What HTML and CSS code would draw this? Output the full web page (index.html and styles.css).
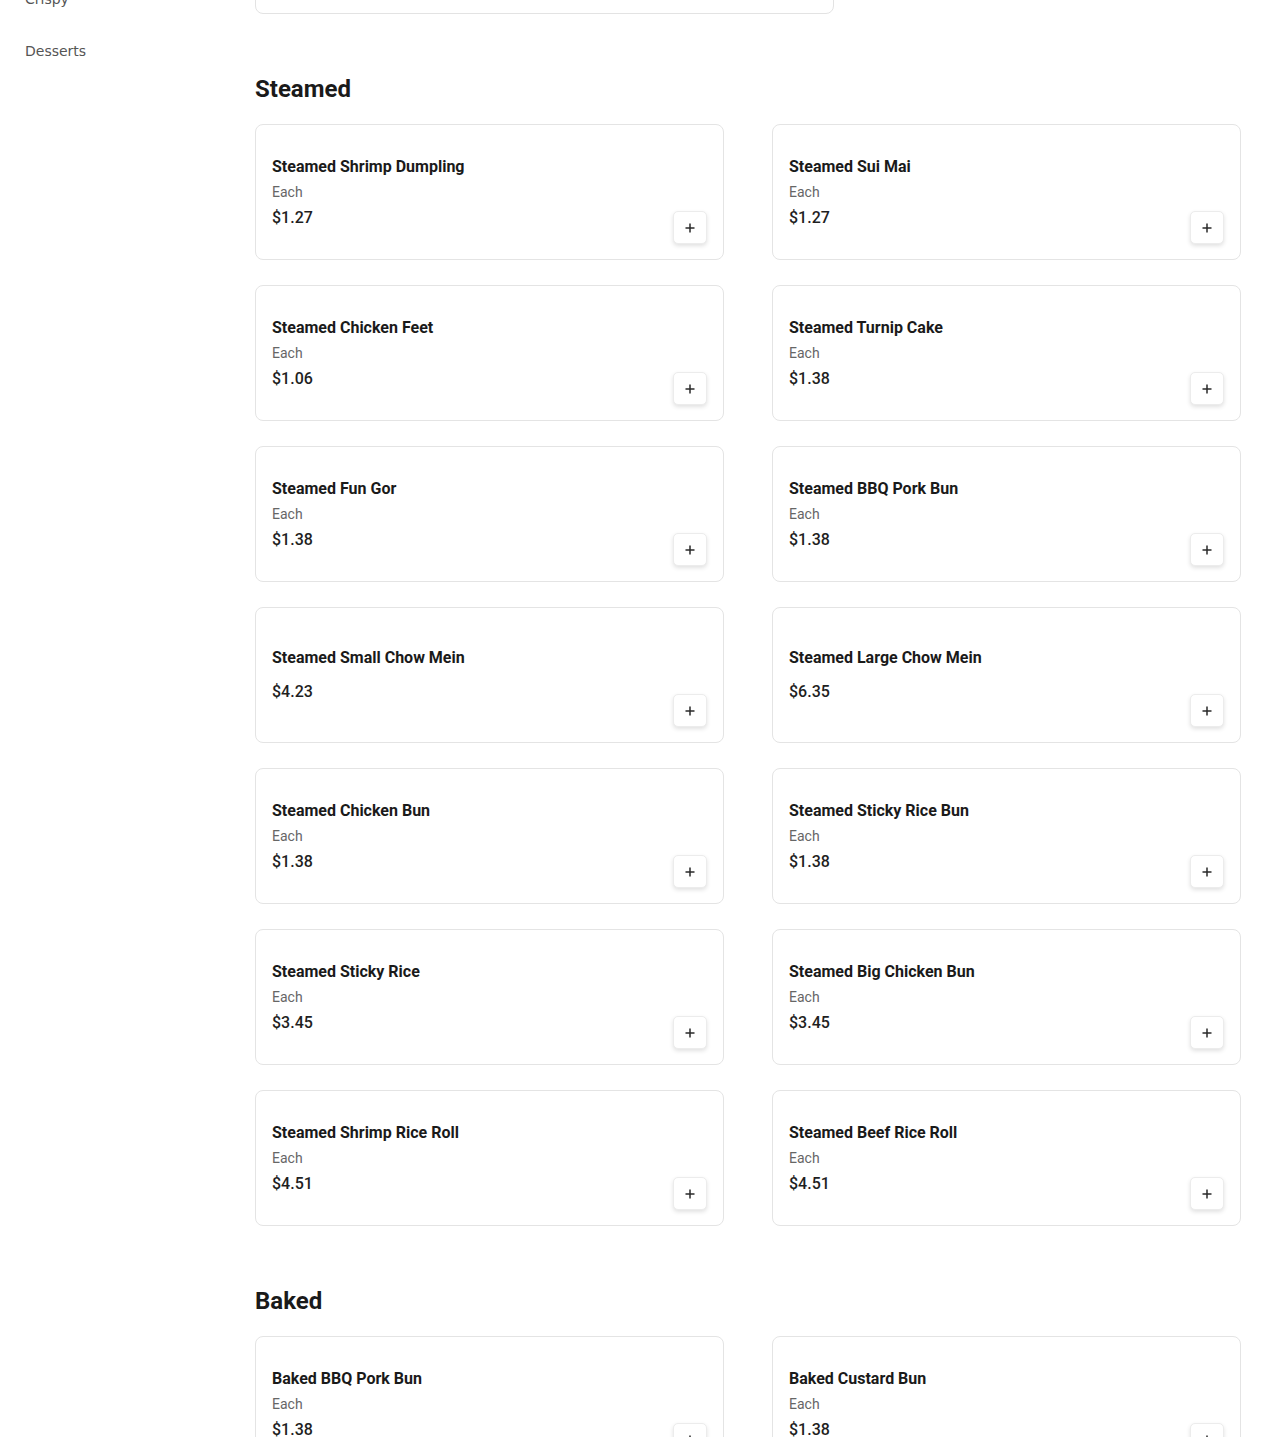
FILE: index.html
```html
<!DOCTYPE html>
<html lang="en">
<head>
<meta charset="utf-8">
<title>Menu</title>
<link rel="stylesheet" href="styles.css">
</head>
<body>
<div class="page">
  <aside class="sidebar">
    <nav class="nav">
      <div class="nav-item">Popular</div>
      <div class="nav-item">Steamed</div>
      <div class="nav-item">Baked</div>
      <div class="nav-item">Crispy</div>
      <div class="nav-item">Desserts</div>
    </nav>
  </aside>
  <main class="main">
    <div class="info-card"></div>

    <section class="section">
      <h2 class="section-title">Steamed</h2>
      <div class="grid">
        <div class="card"><div class="info"><div class="title">Steamed Shrimp Dumpling</div><div class="desc">Each</div><div class="price">$1.27</div></div><button class="add"><svg viewBox="0 0 12 12" width="12" height="12"><path d="M6 1.5v9M1.5 6h9"/></svg></button></div>
        <div class="card"><div class="info"><div class="title">Steamed Sui Mai</div><div class="desc">Each</div><div class="price">$1.27</div></div><button class="add"><svg viewBox="0 0 12 12" width="12" height="12"><path d="M6 1.5v9M1.5 6h9"/></svg></button></div>
        <div class="card"><div class="info"><div class="title">Steamed Chicken Feet</div><div class="desc">Each</div><div class="price">$1.06</div></div><button class="add"><svg viewBox="0 0 12 12" width="12" height="12"><path d="M6 1.5v9M1.5 6h9"/></svg></button></div>
        <div class="card"><div class="info"><div class="title">Steamed Turnip Cake</div><div class="desc">Each</div><div class="price">$1.38</div></div><button class="add"><svg viewBox="0 0 12 12" width="12" height="12"><path d="M6 1.5v9M1.5 6h9"/></svg></button></div>
        <div class="card"><div class="info"><div class="title">Steamed Fun Gor</div><div class="desc">Each</div><div class="price">$1.38</div></div><button class="add"><svg viewBox="0 0 12 12" width="12" height="12"><path d="M6 1.5v9M1.5 6h9"/></svg></button></div>
        <div class="card"><div class="info"><div class="title">Steamed BBQ Pork Bun</div><div class="desc">Each</div><div class="price">$1.38</div></div><button class="add"><svg viewBox="0 0 12 12" width="12" height="12"><path d="M6 1.5v9M1.5 6h9"/></svg></button></div>
        <div class="card"><div class="info"><div class="title">Steamed Small Chow Mein</div><div class="price">$4.23</div></div><button class="add"><svg viewBox="0 0 12 12" width="12" height="12"><path d="M6 1.5v9M1.5 6h9"/></svg></button></div>
        <div class="card"><div class="info"><div class="title">Steamed Large Chow Mein</div><div class="price">$6.35</div></div><button class="add"><svg viewBox="0 0 12 12" width="12" height="12"><path d="M6 1.5v9M1.5 6h9"/></svg></button></div>
        <div class="card"><div class="info"><div class="title">Steamed Chicken Bun</div><div class="desc">Each</div><div class="price">$1.38</div></div><button class="add"><svg viewBox="0 0 12 12" width="12" height="12"><path d="M6 1.5v9M1.5 6h9"/></svg></button></div>
        <div class="card"><div class="info"><div class="title">Steamed Sticky Rice Bun</div><div class="desc">Each</div><div class="price">$1.38</div></div><button class="add"><svg viewBox="0 0 12 12" width="12" height="12"><path d="M6 1.5v9M1.5 6h9"/></svg></button></div>
        <div class="card"><div class="info"><div class="title">Steamed Sticky Rice</div><div class="desc">Each</div><div class="price">$3.45</div></div><button class="add"><svg viewBox="0 0 12 12" width="12" height="12"><path d="M6 1.5v9M1.5 6h9"/></svg></button></div>
        <div class="card"><div class="info"><div class="title">Steamed Big Chicken Bun</div><div class="desc">Each</div><div class="price">$3.45</div></div><button class="add"><svg viewBox="0 0 12 12" width="12" height="12"><path d="M6 1.5v9M1.5 6h9"/></svg></button></div>
        <div class="card"><div class="info"><div class="title">Steamed Shrimp Rice Roll</div><div class="desc">Each</div><div class="price">$4.51</div></div><button class="add"><svg viewBox="0 0 12 12" width="12" height="12"><path d="M6 1.5v9M1.5 6h9"/></svg></button></div>
        <div class="card"><div class="info"><div class="title">Steamed Beef Rice Roll</div><div class="desc">Each</div><div class="price">$4.51</div></div><button class="add"><svg viewBox="0 0 12 12" width="12" height="12"><path d="M6 1.5v9M1.5 6h9"/></svg></button></div>
      </div>
    </section>

    <section class="section">
      <h2 class="section-title">Baked</h2>
      <div class="grid">
        <div class="card"><div class="info"><div class="title">Baked BBQ Pork Bun</div><div class="desc">Each</div><div class="price">$1.38</div></div><button class="add"><svg viewBox="0 0 12 12" width="12" height="12"><path d="M6 1.5v9M1.5 6h9"/></svg></button></div>
        <div class="card"><div class="info"><div class="title">Baked Custard Bun</div><div class="desc">Each</div><div class="price">$1.38</div></div><button class="add"><svg viewBox="0 0 12 12" width="12" height="12"><path d="M6 1.5v9M1.5 6h9"/></svg></button></div>
      </div>
    </section>
  </main>
</div>
</body>
</html>
```

FILE: styles.css
```css
* { box-sizing: border-box; }

html, body {
  margin: 0;
  padding: 0;
  background: #ffffff;
}

body {
  font-family: "DejaVu Sans", sans-serif;
  color: #1a1a1a;
  overflow: hidden;
}

/* page is shown scrolled down 200px */
.page {
  display: flex;
  align-items: flex-start;
  margin-top: -200px;
}

.sidebar {
  width: 231px;
  flex: none;
  padding: 17px 0 0 25px;
}

.nav-item {
  font-family: "DejaVu Sans", sans-serif;
  font-size: 14px;
  line-height: 20px;
  color: #555555;
  padding: 16px 0;
}

.main {
  flex: 1;
  min-width: 0;
  padding: 0 29px 0 24px;
  font-family: Roboto, "Liberation Sans", sans-serif;
}

.info-card {
  width: 579px;
  height: 214px;
  border: 1px solid #e3e3e3;
  border-radius: 8px;
}

.section {
  margin-top: 59px;
}

.section-title {
  margin: 0 0 18px;
  font-size: 24px;
  line-height: 33px;
  font-weight: 700;
  color: #1a1a1a;
}

.grid {
  display: grid;
  grid-template-columns: 1fr 1fr;
  column-gap: 48px;
  row-gap: 25px;
}

.card {
  display: flex;
  align-items: center;
  justify-content: space-between;
  min-height: 136px;
  padding: 16px;
  border: 1px solid #e4e4e4;
  border-radius: 8px;
  background: #fff;
}

.info {
  display: flex;
  flex-direction: column;
}

.title {
  font-size: 16px;
  line-height: 24px;
  font-weight: 700;
  color: #1a1a1a;
  margin-bottom: 3px;
}

.desc {
  font-size: 14px;
  line-height: 20px;
  color: #666666;
}

.price {
  font-size: 16px;
  line-height: 24px;
  font-weight: 500;
  color: #1f1f1f;
}

.desc + .price { margin-top: 4px; }
.title + .price { margin-top: 7px; }

.add {
  align-self: flex-end;
  width: 34px;
  height: 33px;
  padding: 0;
  margin-bottom: -1px;
  display: flex;
  align-items: center;
  justify-content: center;
  background: #fff;
  border: 1px solid #ececec;
  border-radius: 5px;
  box-shadow: 0 2px 4px rgba(0, 0, 0, 0.12);
  cursor: pointer;
}

.add svg {
  display: block;
}

.add path {
  fill: none;
  stroke: #2a2a2a;
  stroke-width: 1.5;
}
```
